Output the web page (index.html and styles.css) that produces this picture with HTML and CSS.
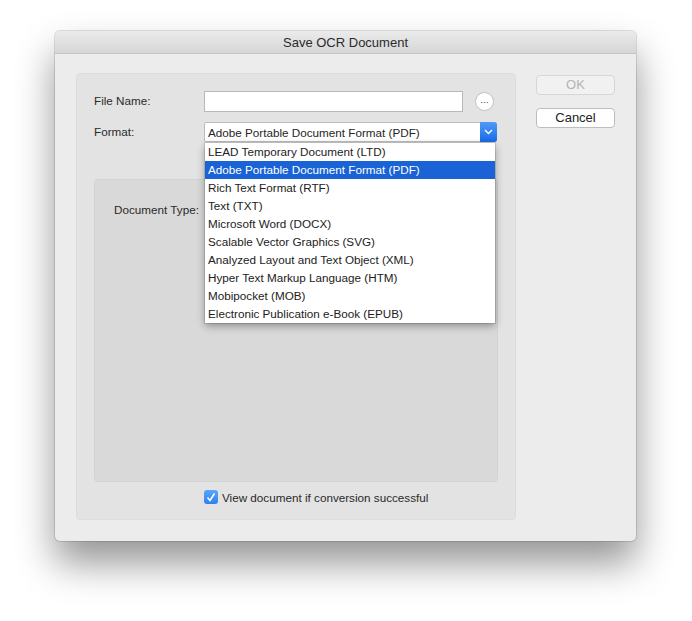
FILE: index.html
```html
<!DOCTYPE html>
<html>
<head>
<meta charset="utf-8">
<link rel="stylesheet" href="styles.css">
</head>
<body>
<div class="window">
  <div class="titlebar">Save OCR Document</div>
  <div class="content">
    <div class="group">
      <div class="row">
        <span class="label">File Name:</span>
        <div class="textfield"></div>
        <div class="ellipsis">…</div>
      </div>
      <div class="row row2">
        <span class="label">Format:</span>
        <div class="select">
          <span class="select-text">Adobe Portable Document Format (PDF)</span>
          <span class="select-arrow"><svg width="9" height="6" viewBox="0 0 9 6"><path d="M1 1 L4.5 4.5 L8 1" fill="none" stroke="#fff" stroke-width="1.4"/></svg></span>
          <ul class="menu">
            <li>LEAD Temporary Document (LTD)</li>
            <li class="sel">Adobe Portable Document Format (PDF)</li>
            <li>Rich Text Format (RTF)</li>
            <li>Text (TXT)</li>
            <li>Microsoft Word (DOCX)</li>
            <li>Scalable Vector Graphics (SVG)</li>
            <li>Analyzed Layout and Text Object (XML)</li>
            <li>Hyper Text Markup Language (HTM)</li>
            <li>Mobipocket (MOB)</li>
            <li>Electronic Publication e-Book (EPUB)</li>
          </ul>
        </div>
      </div>
      <div class="panel">
        <span class="label doc-type">Document Type:</span>
      </div>
      <div class="check-row">
        <span class="checkbox"><svg width="10" height="10" viewBox="0 0 10 10"><path d="M1.5 5.5 L4 8.5 L8.5 1.5" fill="none" stroke="#fff" stroke-width="1.6"/></svg></span>
        <span class="check-label">View document if conversion successful</span>
      </div>
    </div>
    <div class="buttons">
      <div class="btn disabled">OK</div>
      <div class="btn">Cancel</div>
    </div>
  </div>
</div>
</body>
</html>
```

FILE: styles.css
```css
html, body {
  margin: 0;
  padding: 0;
  background: #ffffff;
}
body {
  font-family: "Liberation Sans", Arial, sans-serif;
  font-size: 11.7px;
  color: #262626;
  padding: 31px 0 0 55px;
  width: 692px;
  height: 621px;
  box-sizing: border-box;
}
.window {
  width: 581px;
  height: 510px;
  background: #ececec;
  border-radius: 5px;
  box-shadow: 0 22px 38px rgba(0,0,0,0.42), 0 0 0 1px rgba(0,0,0,0.12);
  display: flex;
  flex-direction: column;
}
.titlebar {
  height: 22px;
  line-height: 23px;
  text-align: center;
  font-size: 13px;
  color: #2b2b2b;
  background: linear-gradient(#ebebeb, #d6d6d6);
  border-bottom: 1px solid #c4c4c4;
  border-radius: 5px 5px 0 0;
  flex: none;
}
.content {
  display: flex;
  padding: 19px 20px 20px 21px;
  gap: 20px;
  flex: 1;
}
.group {
  width: 440px;
  height: 447px;
  background: #e3e3e3;
  border: 1px solid #dddddd;
  border-radius: 4px;
  box-sizing: border-box;
  padding: 17px 17px 0 17px;
  display: flex;
  flex-direction: column;
}
.row {
  display: flex;
  align-items: center;
  height: 21px;
}
.row2 {
  margin-top: 10px;
  height: 20px;
  position: relative;
  z-index: 2;
}
.label {
  width: 110px;
  flex: none;
  color: #2a2a2a;
  position: relative;
  top: -1px;
}
.textfield {
  width: 259px;
  height: 21px;
  box-sizing: border-box;
  background: #fff;
  border: 1px solid #b8b8b8;
}
.ellipsis {
  width: 19px;
  height: 19px;
  margin-left: 12px;
  border-radius: 50%;
  background: #fff;
  border: 1px solid #c2c2c2;
  box-sizing: border-box;
  font-size: 9px;
  line-height: 15px;
  text-align: center;
  color: #333;
}
.select {
  position: relative;
  width: 293px;
  height: 20px;
  box-sizing: border-box;
  background: #fff;
  border: 1px solid #bcbcbc;
  border-radius: 2px;
  display: flex;
  align-items: center;
}
.select-text {
  padding-left: 3px;
  flex: 1;
}
.select-arrow {
  width: 17px;
  height: 20px;
  margin: -1px -1px -1px 0;
  background: linear-gradient(#4e9bf8, #1a6ae6);
  border-radius: 0 3px 3px 0;
  display: flex;
  align-items: center;
  justify-content: center;
}
.menu {
  position: absolute;
  left: 0;
  top: 20px;
  width: 290px;
  margin: 0;
  padding: 0;
  list-style: none;
  background: #fff;
  box-shadow: 0 3px 8px rgba(0,0,0,0.35), 0 0 0 1px rgba(0,0,0,0.12);
}
.menu li {
  height: 18px;
  line-height: 18px;
  padding-left: 3px;
  color: #222;
}
.menu li.sel {
  background: #1963d6;
  color: #fff;
}
.panel {
  margin-top: 37px;
  width: 404px;
  height: 303px;
  background: #d9d9d9;
  border: 1px solid #d3d3d3;
  border-radius: 4px;
  box-sizing: border-box;
  padding: 24px 0 0 19px;
}
.doc-type {
  display: block;
}
.check-row {
  display: flex;
  align-items: center;
  margin-top: 8px;
  padding-left: 110px;
  height: 14px;
}
.checkbox {
  width: 14px;
  height: 14px;
  border-radius: 3px;
  background: linear-gradient(#5aa6fb, #2f7ff2);
  display: flex;
  align-items: center;
  justify-content: center;
  margin-right: 4px;
}
.check-label {
  color: #2a2a2a;
}
.buttons {
  display: flex;
  flex-direction: column;
  gap: 13px;
  padding-top: 2px;
}
.btn {
  width: 79px;
  height: 20px;
  box-sizing: border-box;
  background: #fff;
  border: 1px solid #bdbdbd;
  border-radius: 4px;
  text-align: center;
  line-height: 18px;
  font-size: 13px;
  color: #222;
}
.btn.disabled {
  background: #f1f1f1;
  border-color: #d6d6d6;
  color: #b4b4b4;
}
```
